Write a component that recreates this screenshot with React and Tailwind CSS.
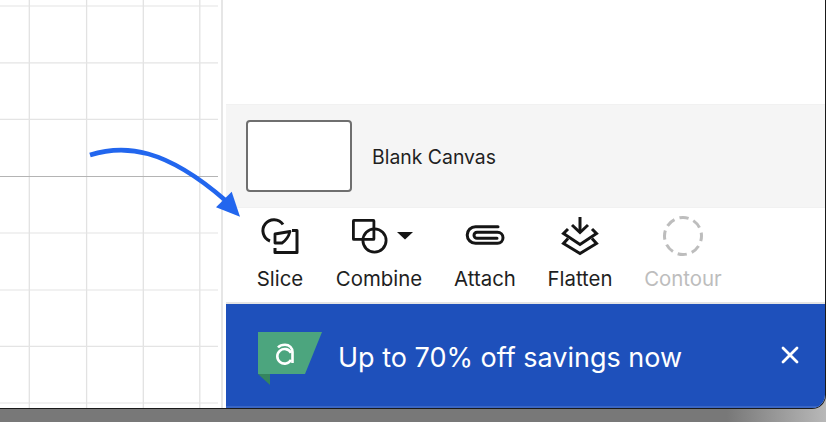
import React from "react";

const V = [29.3, 86.6, 143.3, 199.8];
const H = [6, 62.8, 119.3, 176.5, 233, 290, 346.3, 403];

function Grid() {
  return (
    <svg width="218" height="408" className="block">
      {V.map((x) => (
        <line key={x} x1={x} x2={x} y1="0" y2="408" stroke="#e2e2e2" strokeWidth="1.3" />
      ))}
      {H.map((y) => (
        <line key={y} x1="0" x2="218" y1={y} y2={y} stroke={y === 176.5 ? "#b4b4b4" : "#e4e4e4"} strokeWidth={y === 176.5 ? 1 : 1.2} />
      ))}
    </svg>
  );
}

function Tool({ label, disabled, children, className }) {
  return (
    <div className={"flex flex-col items-center " + (className || "")}>
      <div className="h-[48px] flex items-center justify-center">{children}</div>
      <span className={"text-[20.4px] leading-[26px] mt-[6px] whitespace-nowrap " + (disabled ? "text-[#bdbdbd]" : "text-[#1f1f1f]")}>{label}</span>
    </div>
  );
}

export default function App() {
  return (
    <div className="relative w-[826px] h-[422px] overflow-hidden bg-[linear-gradient(to_right,#787878_0%,#787878_88%,#b8b8b8_100%)] font-['Inter','Liberation_Sans',sans-serif]">
      <div className="h-[409px] bg-white border-b border-r border-[#1a1a1a] rounded-br-[14px] overflow-hidden flex">
        <div className="w-[218px] shrink-0">
          <Grid />
        </div>
        <div className="w-[8px] shrink-0 flex justify-start pl-[3px]">
          <div className="w-[2px] bg-[#e6e6e6]" />
        </div>
        <div className="flex-1 flex flex-col min-w-0">
          <div className="h-[104px]" />
          <div className="h-[104px] bg-[#f5f5f5] border-t border-b border-[#f1f1f1] flex items-center pl-[20px]">
            <div className="w-[106px] h-[72px] bg-white border-2 border-[#6f6f6f] rounded-[4px]" />
            <span className="ml-[20px] mt-[3px] text-[19.4px] text-[#1f1f1f]">Blank Canvas</span>
          </div>
          <div className="h-[94px] flex items-start pt-[4px] pl-[31px]">
            <Tool label="Slice" className="w-[46px]">
              <svg width="42" height="42" viewBox="0 0 42 42" fill="none" stroke="#151515" strokeWidth="3">
                <path d="M24 9.5 A11 11 0 1 0 11 26" />
                <path d="M16 19 L31 16.5 Q29 24 23 28 H16 Z" strokeWidth="2.8" strokeLinejoin="round" />
                <path d="M33 15.5 H38 V37.5 H16 V33" strokeLinejoin="round" />
              </svg>
            </Tool>
            <Tool label="Combine" className="w-[86px] ml-[33px]">
              <svg width="68" height="42" viewBox="0 0 68 42" fill="none" stroke="#151515" strokeWidth="2.8">
                <rect x="8.4" y="5.4" width="20.5" height="19" rx="0.5" />
                <circle cx="29.5" cy="25.5" r="11.6" />
                <path d="M52 17 H68 L60 24.5 Z" fill="#151515" stroke="none" />
              </svg>
            </Tool>
            <Tool label="Attach" className="w-[62px] ml-[32px]">
              <svg width="44" height="30" viewBox="0 0 44 30" fill="none" stroke="#151515" strokeWidth="3" strokeLinecap="round">
                <path d="M35 5.7 H12.5 A8.3 8.3 0 0 0 12.5 22.3 H34.5 A5.5 5.5 0 0 0 34.5 11.3 H14 A3 3 0 0 0 14 17.3 H34" />
              </svg>
            </Tool>
            <Tool label="Flatten" className="w-[64px] ml-[32px]">
              <svg width="38" height="42" viewBox="0 0 38 42" fill="none" stroke="#151515" strokeWidth="3">
                <path d="M19 2 V17" />
                <path d="M11 10 L19 17.5 L27 10" />
                <path d="M7 14 L2.5 18.5 L19 29.5 L35.5 18.5 L31 14" />
                <path d="M7 23.5 L2.5 28.5 L19 38.5 L35.5 28.5 L31 23.5" />
              </svg>
            </Tool>
            <Tool label="Contour" disabled className="w-[78px] ml-[32px]">
              <svg width="42" height="42" viewBox="0 0 42 42" fill="none" stroke="#bdbdbd" strokeWidth="3">
                <circle cx="21" cy="21" r="18.5" strokeDasharray="9.3 5.2" strokeDashoffset="4" />
              </svg>
            </Tool>
          </div>
          <div className="h-[2px] bg-[#e4e4e4]" />
          <div className="flex-1 bg-[#1e50bb] border-b-2 border-[#3a66c4] flex items-center pl-[32px] pr-[26px]">
            <svg width="64" height="54" viewBox="0 0 64 54" className="shrink-0 mt-[7px]">
              <path d="M0 0 H64 L47 42 H0 Z" fill="#4ca57e" />
              <path d="M0 42 H12 V53 Z" fill="#35855f" />
              <g fill="none" stroke="#ffffff" strokeWidth="2.6">
                <path d="M20 15.5 C22 13.3 25 12.8 27 12.8 C31.5 12.8 34.5 16 34.5 20 V31" />
                <path d="M33 20.8 A7.3 7.3 0 1 0 33 27.8" />
              </g>
            </svg>
            <span className="ml-[16px] mt-[4px] text-[27px] leading-none text-white whitespace-nowrap">Up to 70% off savings now</span>
            <svg width="18" height="18" viewBox="0 0 18 18" className="ml-auto shrink-0" stroke="#ffffff" strokeWidth="2.8" strokeLinecap="round">
              <path d="M2 2 L16 16 M16 2 L2 16" />
            </svg>
          </div>
        </div>
      </div>
      <svg width="170" height="80" viewBox="0 0 170 80" className="absolute left-[85px] top-[142px] pointer-events-none">
        <path d="M5 13 C40 2 80 6 140 58" fill="none" stroke="#2266ee" strokeWidth="4.6" />
        <path d="M146.7 49.7 L155 74.7 L131 65.3 Z" fill="#2266ee" />
      </svg>
    </div>
  );
}
